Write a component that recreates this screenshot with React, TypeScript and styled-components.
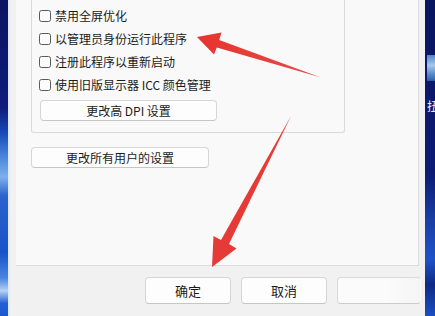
import React from "react";
import styled, { createGlobalStyle } from "styled-components";

const GlobalStyle = createGlobalStyle`
  html, body {
    margin: 0;
    padding: 0;
    width: 435px;
    height: 316px;
    overflow: hidden;
    background: #f0f0f0;
  }
  body {
    font-family: "Noto Sans CJK SC", "Noto Sans", sans-serif;
    color: #1b1b1b;
  }
  * { box-sizing: border-box; }
`;

const Screen = styled.div`
  position: relative;
  display: flex;
  width: 435px;
  height: 316px;
  overflow: hidden;
`;

const LeftWall = styled.div`
  width: 8px;
  flex: none;
  background: linear-gradient(
    180deg,
    #0b1462 0%,
    #0e1c7a 34%,
    #1849b8 42%,
    #4d88dc 50%,
    #7fb0ec 56%,
    #2a63cc 62%,
    #1a52c9 80%,
    #4a86e0 88%,
    #b6d2f4 92%,
    #2260d4 96%,
    #1b58d0 100%
  );
`;

const RightWall = styled.div`
  width: 10px;
  flex: none;
  display: flex;
  flex-direction: column;
  overflow: hidden;
  background: linear-gradient(
    180deg,
    #0a1560 0%,
    #0d1b74 55%,
    #1a3fa6 70%,
    #1f53c8 82%,
    #0f2a86 90%,
    #1b4fc2 100%
  );
`;

const DeskIcon = styled.div`
  margin-top: 55px;
  margin-left: 2px;
  width: 8px;
  height: 26px;
  background: linear-gradient(180deg, #4f86c9, #a8c8ea 40%, #5d92cf 70%, #2d5fa8);
`;

const DeskLabel = styled.span`
  margin-top: 18px;
  margin-left: 2px;
  font-size: 12px;
  line-height: 14px;
  color: #e8eef8;
  white-space: nowrap;
`;

const Dialog = styled.div`
  flex: 1;
  display: flex;
  flex-direction: column;
  background: #f1f1f1;
  border-left: 2px solid #e3e9f2;
`;

const Page = styled.div`
  height: 266px;
  margin-left: 6px;
  margin-right: 6px;
  padding-left: 15px;
  background: #f9f9f9;
  border-right: 1px solid #dcdcdc;
  border-bottom: 1px solid #dcdcdc;
  display: flex;
  flex-direction: column;
  align-items: flex-start;
`;

const GroupBox = styled.div`
  width: 314px;
  padding: 4px 0 11px 7px;
  border: 1px solid #dadada;
  border-top: none;
  border-radius: 0 0 3px 3px;
  display: flex;
  flex-direction: column;
  align-items: flex-start;
`;

const CheckRow = styled.label`
  height: 23px;
  display: flex;
  align-items: center;
  gap: 4px;
  font-size: 12px;
  line-height: 14px;
  white-space: nowrap;
`;

const CheckBox = styled.span`
  width: 12px;
  height: 12px;
  border: 1px solid #5a5a5a;
  border-radius: 2.5px;
  background: #fcfcfc;
  flex: none;
`;

const Button = styled.button<{ $w: number; $h: number; $size: number }>`
  width: ${(p) => p.$w}px;
  height: ${(p) => p.$h}px;
  padding: 0;
  font-family: inherit;
  font-size: ${(p) => p.$size}px;
  line-height: 1;
  color: #1b1b1b;
  background: #fdfdfd;
  border: 1px solid #d6d6d6;
  border-bottom-color: #c6c6c6;
  border-radius: 4px;
  display: flex;
  align-items: center;
  justify-content: center;
  flex: none;
`;

const DpiButton = styled(Button)`
  margin-top: 4px;
  margin-left: 1px;
`;

const AllUsersButton = styled(Button)`
  margin-top: 14px;
`;

const Footer = styled.div`
  display: flex;
  gap: 10px;
  padding-top: 11px;
  padding-left: 135px;
`;

const FadedButton = styled(Button)`
  border-right-color: transparent;
  background: linear-gradient(90deg, #fdfdfd 60%, #f6f6f6);
  border-image: none;
  opacity: 0.85;
`;

const Overlay = styled.svg`
  position: absolute;
  left: 0;
  top: 0;
  width: 435px;
  height: 316px;
  pointer-events: none;
`;

const options = [
  "禁用全屏优化",
  "以管理员身份运行此程序",
  "注册此程序以重新启动",
  "使用旧版显示器 ICC 颜色管理",
];

export default function App() {
  return (
    <>
      <GlobalStyle />
      <Screen>
        <LeftWall />
        <Dialog>
          <Page>
            <GroupBox>
              {options.map((t) => (
                <CheckRow key={t}>
                  <CheckBox />
                  {t}
                </CheckRow>
              ))}
              <DpiButton $w={177} $h={21} $size={12}>
                更改高 DPI 设置
              </DpiButton>
            </GroupBox>
            <AllUsersButton $w={178} $h={21} $size={12}>
              更改所有用户的设置
            </AllUsersButton>
          </Page>
          <Footer>
            <Button $w={86} $h={27} $size={13}>确定</Button>
            <Button $w={86} $h={27} $size={13}>取消</Button>
            <FadedButton $w={84} $h={27} $size={13} />
          </Footer>
        </Dialog>
        <RightWall>
          <DeskIcon />
          <DeskLabel>扭</DeskLabel>
        </RightWall>
        <Overlay viewBox="0 0 435 316">
          <defs>
            <linearGradient id="red1" x1="0" y1="0" x2="1" y2="0">
              <stop offset="0" stopColor="#e8322f" />
              <stop offset="1" stopColor="#e0504c" />
            </linearGradient>
          </defs>
          <polygon
            fill="url(#red1)"
            points="197,37 221.5,32.5 219.2,40 321,77.5 216.8,47.6 214,54.5"
          />
          <polygon
            fill="#e63a36"
            points="212,267 213.5,236 221,239.9 291,116 229,244.1 236.5,248.5"
          />
        </Overlay>
      </Screen>
    </>
  );
}
